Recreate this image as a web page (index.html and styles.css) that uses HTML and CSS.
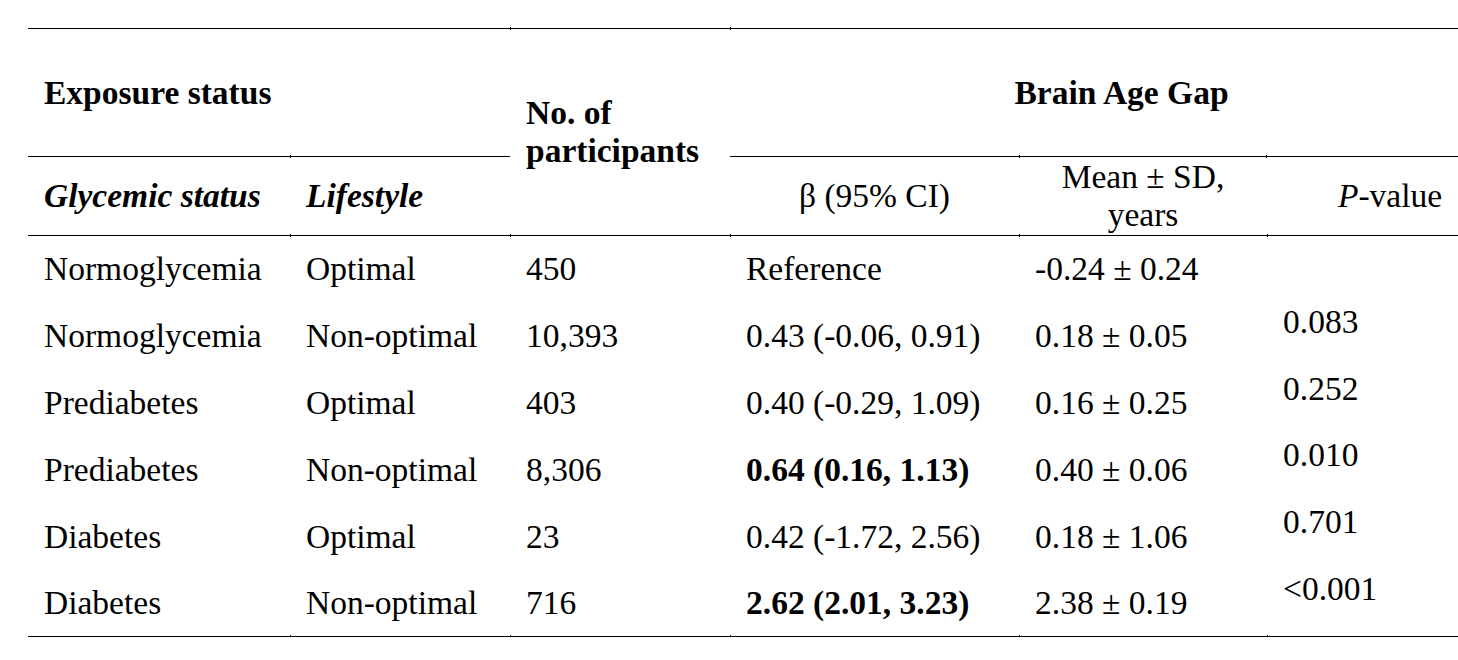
FILE: index.html
```html
<!DOCTYPE html>
<html lang="en">
<head>
<meta charset="utf-8">
<title>Brain Age Gap by glycemic status and lifestyle</title>
<link rel="stylesheet" href="styles.css">
</head>
<body>
<div class="table">
  <div class="cell head span-2 line-top line-bottom bold exposure">Exposure status</div>
  <div class="cell head rows-2 line-top line-bottom bold tick-top tick">
    <span class="stack">No. of<br>participants</span>
  </div>
  <div class="cell head span-3 line-top line-bottom bold center tick-top brain">Brain Age Gap</div>

  <div class="cell head line-bottom bold italic">Glycemic status</div>
  <div class="cell head line-bottom bold italic tick">Lifestyle</div>
  <div class="cell head line-bottom center tick">β (95% CI)</div>
  <div class="cell head line-bottom center tick"><span class="stack">Mean ± SD,<br>years</span></div>
  <div class="cell head line-bottom center tick"><span><i>P</i>-value</span></div>

  <div class="cell">Normoglycemia</div>
  <div class="cell">Optimal</div>
  <div class="cell">450</div>
  <div class="cell">Reference</div>
  <div class="cell">-0.24 ± 0.24</div>
  <div class="cell pval"></div>

  <div class="cell">Normoglycemia</div>
  <div class="cell">Non-optimal</div>
  <div class="cell">10,393</div>
  <div class="cell">0.43 (-0.06, 0.91)</div>
  <div class="cell">0.18 ± 0.05</div>
  <div class="cell pval">0.083</div>

  <div class="cell">Prediabetes</div>
  <div class="cell">Optimal</div>
  <div class="cell">403</div>
  <div class="cell">0.40 (-0.29, 1.09)</div>
  <div class="cell">0.16 ± 0.25</div>
  <div class="cell pval">0.252</div>

  <div class="cell">Prediabetes</div>
  <div class="cell">Non-optimal</div>
  <div class="cell">8,306</div>
  <div class="cell bold">0.64 (0.16, 1.13)</div>
  <div class="cell">0.40 ± 0.06</div>
  <div class="cell pval">0.010</div>

  <div class="cell">Diabetes</div>
  <div class="cell">Optimal</div>
  <div class="cell">23</div>
  <div class="cell">0.42 (-1.72, 2.56)</div>
  <div class="cell">0.18 ± 1.06</div>
  <div class="cell pval">0.701</div>

  <div class="cell line-bottom">Diabetes</div>
  <div class="cell line-bottom tick">Non-optimal</div>
  <div class="cell line-bottom tick">716</div>
  <div class="cell line-bottom bold tick">2.62 (2.01, 3.23)</div>
  <div class="cell line-bottom tick">2.38 ± 0.19</div>
  <div class="cell line-bottom pval tick">&lt;0.001</div>
</div>
</body>
</html>
```

FILE: styles.css
```css
html, body {
  margin: 0;
  padding: 0;
  background: #ffffff;
  overflow: hidden;
}

body {
  font-family: "Liberation Serif", "Times New Roman", serif;
  font-size: 33.5px;
  line-height: 38px;
  color: #000000;
}

.table {
  display: grid;
  grid-template-columns: 262px 220px 220px 289px 248px 246px;
  grid-template-rows: 129px 79px repeat(6, 66.8px);
  width: 1485px;
  margin: 28px 0 0 28px;
}

.cell {
  position: relative;
  box-sizing: border-box;
  display: flex;
  align-items: center;
  padding-left: 16px;
  white-space: nowrap;
}

.line-top {
  border-top: 1px solid #000000;
}

.line-bottom {
  border-bottom: 1px solid #000000;
}

.span-2 {
  grid-column: span 2;
}

.span-3 {
  grid-column: span 3;
}

.rows-2 {
  grid-row: span 2;
}

.bold {
  font-weight: bold;
}

.italic {
  font-style: italic;
}

.center {
  justify-content: center;
  text-align: center;
  padding-left: 0;
}

.stack {
  display: block;
}

.pval {
  align-items: flex-start;
}

/* small column ticks where the rules meet column boundaries */
.tick::after {
  content: "";
  position: absolute;
  left: 0;
  bottom: -2px;
  width: 1px;
  height: 3px;
  background: #000000;
}

.tick-top::before {
  content: "";
  position: absolute;
  left: 0;
  top: -2px;
  width: 1px;
  height: 3px;
  background: #000000;
}

.exposure::after {
  content: "";
  position: absolute;
  left: 262px;
  bottom: -2px;
  width: 1px;
  height: 3px;
  background: #000000;
}

.brain::after {
  content: "";
  position: absolute;
  left: 289px;
  bottom: -2px;
  width: 246px;
  height: 3px;
  border-left: 1px solid #000000;
  border-right: 1px solid #000000;
}
```
